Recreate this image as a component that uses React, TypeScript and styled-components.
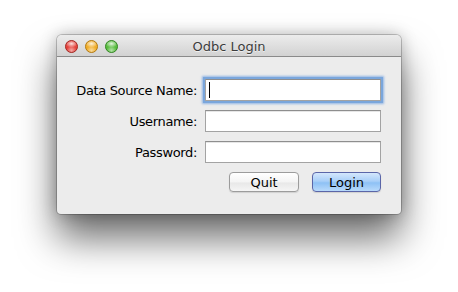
import React from 'react'
import styled, { createGlobalStyle } from 'styled-components'

const GlobalStyle = createGlobalStyle`
  html, body {
    margin: 0;
    padding: 0;
    background: #ffffff;
  }
  body {
    font-family: 'DejaVu Sans', 'Liberation Sans', sans-serif;
    -webkit-font-smoothing: antialiased;
  }
`

const Desktop = styled.div`
  width: 458px;
  height: 292px;
  padding: 35px 0 0 57px;
  box-sizing: border-box;
  overflow: hidden;
`

const Window = styled.div`
  width: 344px;
  background: #ececec;
  border-radius: 5px 5px 4px 4px;
  box-shadow: 0 24px 38px rgba(0, 0, 0, 0.58), 0 0 16px rgba(0, 0, 0, 0.25),
    0 0 0 1px rgba(0, 0, 0, 0.2);
  overflow: hidden;
`

const TitleBar = styled.div`
  position: relative;
  height: 21px;
  display: flex;
  align-items: center;
  justify-content: center;
  background: linear-gradient(#ececec, #d2d2d2);
  border-bottom: 1px solid #8a8a8a;
`

const Lights = styled.div`
  position: absolute;
  left: 8px;
  top: 5px;
  display: flex;
  gap: 7px;
`

const Light = styled.span<{ $c: string; $d: string }>`
  width: 13px;
  height: 13px;
  border-radius: 50%;
  box-sizing: border-box;
  border: 1px solid ${(p) => p.$d};
  background: radial-gradient(ellipse 55% 35% at 50% 25%, rgba(255, 255, 255, 0.85) 0, transparent 100%),
    radial-gradient(circle at 50% 85%, rgba(255, 255, 255, 0.55) 0, transparent 45%), ${(p) => p.$c};
`

const Title = styled.div`
  font-size: 13px;
  color: #3c3c3c;
  text-shadow: 0 1px 0 rgba(255, 255, 255, 0.6);
  padding-top: 1px;
`

const Body = styled.div`
  padding: 22px 20px 22px 0;
  display: flex;
  flex-direction: column;
  gap: 9px;
`

const Form = styled.div`
  display: grid;
  grid-template-columns: 141px 176px;
  grid-auto-rows: 22px;
  column-gap: 7px;
  row-gap: 9px;
  align-items: center;
`

const Label = styled.label`
  text-align: right;
  font-size: 13px;
  letter-spacing: -0.35px;
  color: #000;
  white-space: nowrap;
  padding-right: 1px;
`

const Field = styled.div<{ $focused?: boolean }>`
  height: 22px;
  box-sizing: border-box;
  border: 1px solid #a3a3a3;
  border-top-color: #8e8e8e;
  background: #fff;
  display: flex;
  align-items: center;
  padding-left: 3px;
  box-shadow: ${(p) =>
    p.$focused ? '0 0 0 2px #7aa6dc, 0 0 2px 3px rgba(110, 160, 225, 0.7)' : 'inset 0 1px 0 #e6e6e6'};
`

const Caret = styled.span`
  width: 1px;
  height: 16px;
  background: #000;
`

const Buttons = styled.div`
  display: flex;
  justify-content: flex-end;
  gap: 13px;
`

const Button = styled.button<{ $primary?: boolean }>`
  width: ${(p) => (p.$primary ? '69px' : '70px')};
  height: 20px;
  padding: 0;
  font-family: inherit;
  font-size: 13px;
  color: #000;
  border-radius: 4px;
  border: 1px solid ${(p) => (p.$primary ? '#5b66a8' : '#9c9c9c')};
  background: ${(p) =>
    p.$primary
      ? 'linear-gradient(#d4e7fc 0%, #a9cff8 45%, #8ec1f5 55%, #b9dafb 100%)'
      : 'linear-gradient(#ffffff 0%, #f4f4f4 50%, #e8e8e8 55%, #f5f5f5 100%)'};
  box-shadow: 0 1px 1px rgba(0, 0, 0, 0.12);
`

export default function App() {
  return (
    <>
      <GlobalStyle />
      <Desktop>
        <Window>
          <TitleBar>
            <Lights>
              <Light $c="#e5423c" $d="#a22a25" />
              <Light $c="#f0ad28" $d="#b27a14" />
              <Light $c="#58bd3e" $d="#358526" />
            </Lights>
            <Title>Odbc Login</Title>
          </TitleBar>
          <Body>
            <Form>
              <Label>Data Source Name:</Label>
              <Field $focused>
                <Caret />
              </Field>
              <Label>Username:</Label>
              <Field />
              <Label>Password:</Label>
              <Field />
            </Form>
            <Buttons>
              <Button>Quit</Button>
              <Button $primary>Login</Button>
            </Buttons>
          </Body>
        </Window>
      </Desktop>
    </>
  )
}
